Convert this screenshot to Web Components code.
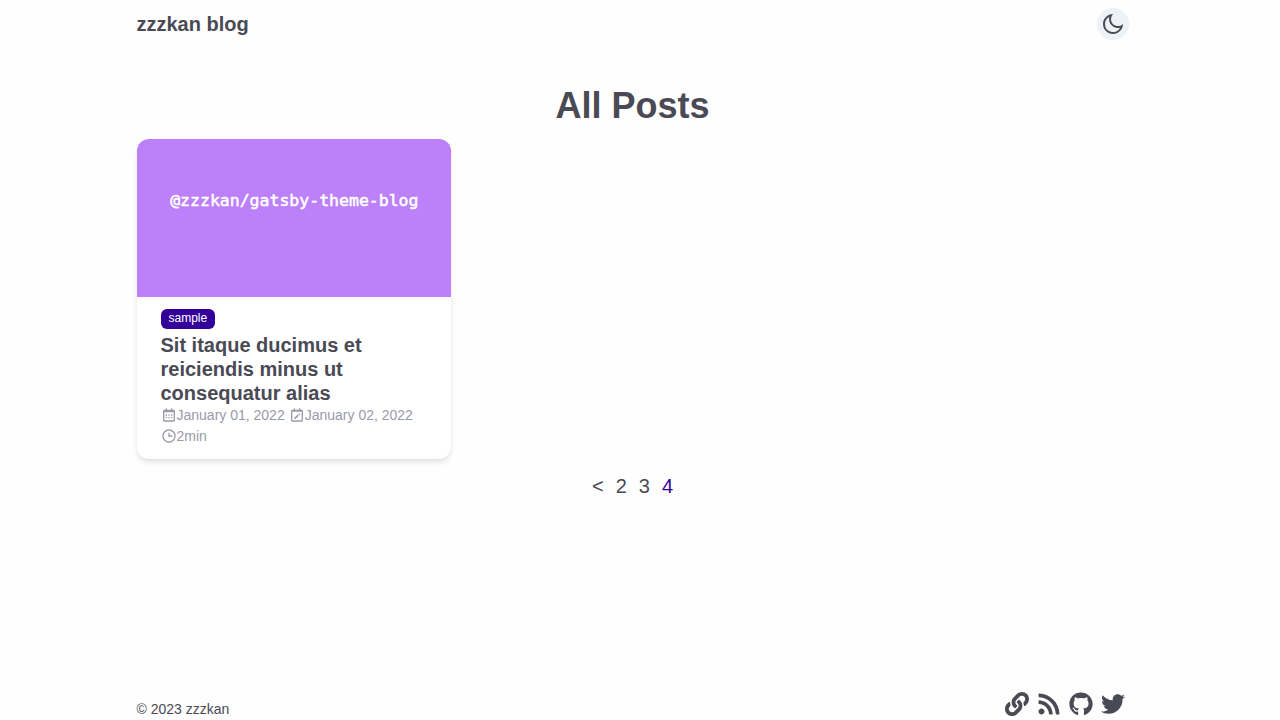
<!DOCTYPE html>
<html lang="en">
<head>
<meta charset="utf-8">
<meta name="viewport" content="width=device-width, initial-scale=1">
<title>All Posts | zzzkan blog</title>
<style>
  html { --text: #4a4a55; --muted: #9a9aaa; --primary: #330099; --chip: #edf2f7; --surface: #ffffff; }
  body { margin: 0; font: 16px/24px "Liberation Sans", Arial, sans-serif; color: var(--text); background: #fefefe; }
</style>
</head>
<body>
<blog-layout>
  <blog-header slot="header"></blog-header>
  <post-list heading="All Posts">
    <post-card tag="sample" published="January 01, 2022" updated="January 02, 2022" minutes="2min" banner="@zzzkan/gatsby-theme-blog">Sit itaque ducimus et reiciendis minus ut consequatur alias</post-card>
  </post-list>
  <page-nav></page-nav>
  <blog-footer slot="footer">© 2023 zzzkan</blog-footer>
</blog-layout>
<script>
const ICONS = {
  moon: ['0 0 24 24', 'M10 7a7 7 0 0 0 12 4.9v.1c0 5.523-4.477 10-10 10S2 17.523 2 12 6.477 2 12 2h.1A6.979 6.979 0 0 0 10 7zm-6 5a8 8 0 0 0 15.062 3.762A9 9 0 0 1 8.238 4.938 7.999 7.999 0 0 0 4 12z'],
  calendar: ['0 0 24 24', 'M7 11h2v2H7zm0 4h2v2H7zm4-4h2v2h-2zm0 4h2v2h-2zm4-4h2v2h-2zm0 4h2v2h-2zM5 22h14c1.103 0 2-.897 2-2V6c0-1.103-.897-2-2-2h-2V2h-2v2H9V2H7v2H5c-1.103 0-2 .897-2 2v14c0 1.103.897 2 2 2zM19 8l.001 12H5V8h14z'],
  edit: ['0 0 24 24', 'M19 4h-2V2h-2v2H9V2H7v2H5c-1.103 0-2 .897-2 2v14c0 1.103.897 2 2 2h14c1.103 0 2-.897 2-2V6c0-1.103-.897-2-2-2zM5 20V7h14V6l.002 14H5zM15.628 12.183l-1.8-1.799 1.37-1.371 1.8 1.799zm-7.623 4.018V18h1.799l4.976-4.97-1.799-1.799z'],
  clock: ['0 0 24 24', 'M12 2C6.486 2 2 6.486 2 12s4.486 10 10 10 10-4.486 10-10S17.514 2 12 2zm0 18c-4.411 0-8-3.589-8-8s3.589-8 8-8 8 3.589 8 8-3.589 8-8 8zM13 7h-2v6h6v-2h-4z'],
  link: ['0 0 512 512', 'M326.612 185.391c59.747 59.809 58.927 155.698.36 214.59-.11.12-.24.25-.36.37l-67.2 67.2c-59.27 59.27-155.699 59.262-214.96 0-59.27-59.26-59.27-155.7 0-214.96l37.106-37.106c9.84-9.84 26.786-3.3 27.294 10.606.648 17.722 3.826 35.527 9.69 52.721 1.986 5.822.567 12.262-3.783 16.612l-13.087 13.087c-28.026 28.026-28.905 73.66-1.155 101.96 28.024 28.579 74.086 28.749 102.325.51l67.2-67.19c28.191-28.191 28.073-73.757 0-101.83-3.701-3.694-7.429-6.564-10.341-8.569a16.037 16.037 0 0 1-6.947-12.606c-.396-10.567 3.348-21.456 11.698-29.806l21.054-21.055c5.521-5.521 14.182-6.199 20.584-1.731a152.482 152.482 0 0 1 20.522 17.197zM467.547 44.449c-59.261-59.262-155.69-59.27-214.96 0l-67.2 67.2c-.12.12-.25.25-.36.37-58.566 58.892-59.387 154.781.36 214.59a152.454 152.454 0 0 0 20.521 17.196c6.402 4.468 15.064 3.789 20.584-1.731l21.054-21.055c8.35-8.35 12.094-19.239 11.698-29.806a16.037 16.037 0 0 0-6.947-12.606c-2.912-2.005-6.64-4.875-10.341-8.569-28.073-28.073-28.191-73.639 0-101.83l67.2-67.19c28.239-28.239 74.3-28.069 102.325.51 27.75 28.3 26.872 73.934-1.155 101.96l-13.087 13.087c-4.35 4.35-5.769 10.79-3.783 16.612 5.864 17.194 9.042 34.999 9.69 52.721.509 13.906 17.454 20.446 27.294 10.606l37.106-37.106c59.271-59.259 59.271-155.699.001-214.959z'],
  rss: ['0 0 448 512', 'M128.081 415.959c0 35.369-28.672 64.041-64.041 64.041S0 451.328 0 415.959s28.672-64.041 64.041-64.041 64.04 28.673 64.04 64.041zm175.66 47.25c-8.354-154.6-132.185-278.587-286.95-286.95C7.656 175.765 0 183.105 0 192.253v48.069c0 8.415 6.49 15.472 14.887 16.018 111.832 7.284 201.473 96.702 208.772 208.772.547 8.397 7.604 14.887 16.018 14.887h48.069c9.149.001 16.489-7.655 15.995-16.79zm144.249.288C439.596 229.677 251.465 40.445 16.503 32.01 7.473 31.686 0 38.981 0 48.016v48.068c0 8.625 6.835 15.645 15.453 15.999 191.179 7.839 344.627 161.316 352.465 352.465.353 8.618 7.373 15.453 15.999 15.453h48.068c9.034-.001 16.329-7.474 16.005-16.504z'],
  github: ['0 0 496 512', 'M165.9 397.4c0 2-2.3 3.6-5.2 3.6-3.3.3-5.6-1.3-5.6-3.6 0-2 2.3-3.6 5.2-3.6 3-.3 5.6 1.3 5.6 3.6zM244.8 8C106.1 8 0 113.3 0 252c0 110.9 69.8 205.8 169.5 239.2 12.8 2.3 17.3-5.6 17.3-12.1 0-6.2-.3-40.4-.3-61.4 0 0-70 15-84.7-29.8 0 0-11.4-29.1-27.8-36.6 0 0-22.9-15.7 1.6-15.4 0 0 24.9 2 38.6 25.8 21.9 38.6 58.6 27.5 72.9 20.9 2.3-16 8.8-27.1 16-33.7-55.9-6.2-112.3-14.3-112.3-110.5 0-27.5 7.6-41.3 23.6-58.9-2.6-6.5-11.1-33.3 2.6-67.9 20.9-6.5 69 27 69 27 20-5.6 41.5-8.5 62.8-8.5s42.8 2.9 62.8 8.5c0 0 48.1-33.6 69-27 13.7 34.7 5.2 61.4 2.6 67.9 16 17.7 25.8 31.5 25.8 58.9 0 96.5-58.9 104.2-114.8 110.5 9.2 7.9 17 22.9 17 46.4 0 33.7-.3 75.4-.3 83.6 0 6.5 4.6 14.4 17.3 12.1C428.2 457.8 496 362.9 496 252 496 113.3 383.5 8 244.8 8z'],
  twitter: ['0 0 512 512', 'M459.37 151.716c.325 4.548.325 9.097.325 13.645 0 138.72-105.583 298.558-298.558 298.558-59.452 0-114.68-17.219-161.137-47.106 8.447.974 16.568 1.299 25.34 1.299 49.055 0 94.213-16.568 130.274-44.832-46.132-.975-84.792-31.188-98.112-72.772 6.498.974 12.995 1.624 19.818 1.624 9.421 0 18.843-1.3 27.614-3.573-48.081-9.747-84.143-51.98-84.143-102.985v-1.299c13.969 7.797 30.214 12.67 47.431 13.319-28.264-18.843-46.781-51.005-46.781-87.391 0-19.492 5.197-37.36 14.294-52.954 51.655 63.675 129.3 105.258 216.365 109.807-1.624-7.797-2.599-15.918-2.599-24.04 0-57.828 46.782-104.934 104.934-104.934 30.213 0 57.502 12.67 76.67 33.137 23.715-4.548 46.456-13.32 66.599-25.34-7.798 24.366-24.366 44.833-46.132 57.827 21.117-2.273 41.584-8.122 60.426-16.243-14.292 20.791-32.161 39.308-52.628 54.253z']
};

class BlogElement extends HTMLElement {
  connectedCallback() {
    if (this.shadowRoot) return;
    const t = document.createElement('template');
    t.innerHTML = this.render();
    this.attachShadow({ mode: 'open' }).append(t.content.cloneNode(true));
  }
}

class BlogIcon extends BlogElement {
  render() {
    const [box, path] = ICONS[this.getAttribute('name')];
    return `<style>
      :host { display: inline-block; width: var(--icon-size, 16px); height: var(--icon-size, 16px); }
      svg { display: block; width: 100%; height: 100%; fill: currentColor; }
    </style><svg viewBox="${box}" aria-hidden="true"><path d="${path}"/></svg>`;
  }
}

class BlogLayout extends BlogElement {
  render() {
    return `<style>
      :host { display: flex; flex-direction: column; min-height: 100vh; box-sizing: border-box; padding: 0 31px 0 16px; }
      .row { width: 100%; max-width: 992px; margin: 0 auto; }
      main { flex: 1; }
    </style>
    <div class="row"><slot name="header"></slot></div>
    <main class="row"><slot></slot></main>
    <div class="row"><slot name="footer"></slot></div>`;
  }
}

class BlogHeader extends BlogElement {
  render() {
    return `<style>
      :host { display: block; }
      header { display: flex; align-items: center; justify-content: space-between; height: 48px; }
      a { color: inherit; font-size: 20px; font-weight: 700; text-decoration: none; }
      button { display: grid; place-items: center; width: 32px; height: 32px; padding: 0; border: 0; border-radius: 50%; background: var(--chip); color: inherit; cursor: pointer; --icon-size: 24px; }
    </style>
    <header><a href="#">zzzkan blog</a><button type="button" aria-label="Toggle dark mode"><blog-icon name="moon"></blog-icon></button></header>`;
  }
}

class PostList extends BlogElement {
  render() {
    return `<style>
      :host { display: block; padding-top: 32px; }
      h1 { margin: 0 0 8px; font-size: 36px; line-height: 51px; text-align: center; }
      .grid { display: grid; grid-template-columns: repeat(3, 1fr); gap: 24px; }
      @media (max-width: 900px) { .grid { grid-template-columns: repeat(2, 1fr); } }
      @media (max-width: 600px) { .grid { grid-template-columns: 1fr; } }
    </style>
    <h1>${this.getAttribute('heading')}</h1><div class="grid"><slot></slot></div>`;
  }
}

class PostCard extends BlogElement {
  render() {
    const a = n => this.getAttribute(n);
    return `<style>
      :host { display: block; }
      article { overflow: hidden; border-radius: 12px; background: var(--surface); box-shadow: 0 4px 6px -1px rgba(0,0,0,.1), 0 2px 4px -1px rgba(0,0,0,.06); }
      .banner { display: block; width: 100%; background: #bb80fa; }
      .banner text { font: 400 63px "DejaVu Sans Mono", monospace; fill: #fff; stroke: #fff; stroke-width: 2; text-anchor: middle; }
      .body { padding: 12px 24px; }
      .tag { display: block; width: fit-content; height: 20px; padding: 0 8px; border-radius: 6px; background: var(--primary); color: #fff; font-size: 12px; line-height: 18px; text-decoration: none; }
      h2 { margin: 4px 0 0; font-size: 20px; line-height: 24px; }
      h2 a { color: inherit; text-decoration: none; }
      .meta { display: flex; flex-wrap: wrap; column-gap: 4px; color: var(--muted); font-size: 14px; line-height: 21px; }
      .meta span { display: flex; align-items: center; }
      .meta blog-icon { margin-bottom: 2px; }
    </style>
    <article>
      <svg class="banner" viewBox="0 0 1200 603" role="img" aria-label="${a('banner')}"><text x="600" y="254">${a('banner')}</text></svg>
      <div class="body">
        <a class="tag" href="#">${a('tag')}</a>
        <h2><a href="#"><slot></slot></a></h2>
        <div class="meta">
          <span><blog-icon name="calendar"></blog-icon><time>${a('published')}</time></span>
          <span><blog-icon name="edit"></blog-icon><time>${a('updated')}</time></span>
          <span><blog-icon name="clock"></blog-icon>${a('minutes')}</span>
        </div>
      </div>
    </article>`;
  }
}

class PageNav extends BlogElement {
  render() {
    return `<style>
      :host { display: block; padding-top: 12px; }
      nav { display: flex; justify-content: center; gap: 12px; font-size: 20px; line-height: 30px; }
      a { color: inherit; text-decoration: none; }
      a[aria-current] { color: var(--primary); }
    </style>
    <nav aria-label="Pages"><a href="#" aria-label="Previous page">&lt;</a><a href="#">2</a><a href="#">3</a><a href="#" aria-current="page">4</a></nav>`;
  }
}

class BlogFooter extends BlogElement {
  render() {
    const links = [['link', 'Website'], ['rss', 'RSS'], ['github', 'GitHub'], ['twitter', 'Twitter']];
    return `<style>
      :host { display: block; }
      footer { display: flex; align-items: flex-end; justify-content: space-between; font-size: 14px; line-height: 21px; }
      small { font-size: inherit; }
      nav { display: flex; gap: 8px; padding: 0 4px 4px 0; --icon-size: 24px; }
      a { display: block; height: 24px; color: inherit; }
    </style>
    <footer><small><slot></slot></small><nav aria-label="Links">${links.map(([n, l]) => `<a href="#" aria-label="${l}"><blog-icon name="${n}"></blog-icon></a>`).join('')}</nav></footer>`;
  }
}

customElements.define('blog-icon', BlogIcon);
customElements.define('blog-layout', BlogLayout);
customElements.define('blog-header', BlogHeader);
customElements.define('post-list', PostList);
customElements.define('post-card', PostCard);
customElements.define('page-nav', PageNav);
customElements.define('blog-footer', BlogFooter);
</script>
</body>
</html>
